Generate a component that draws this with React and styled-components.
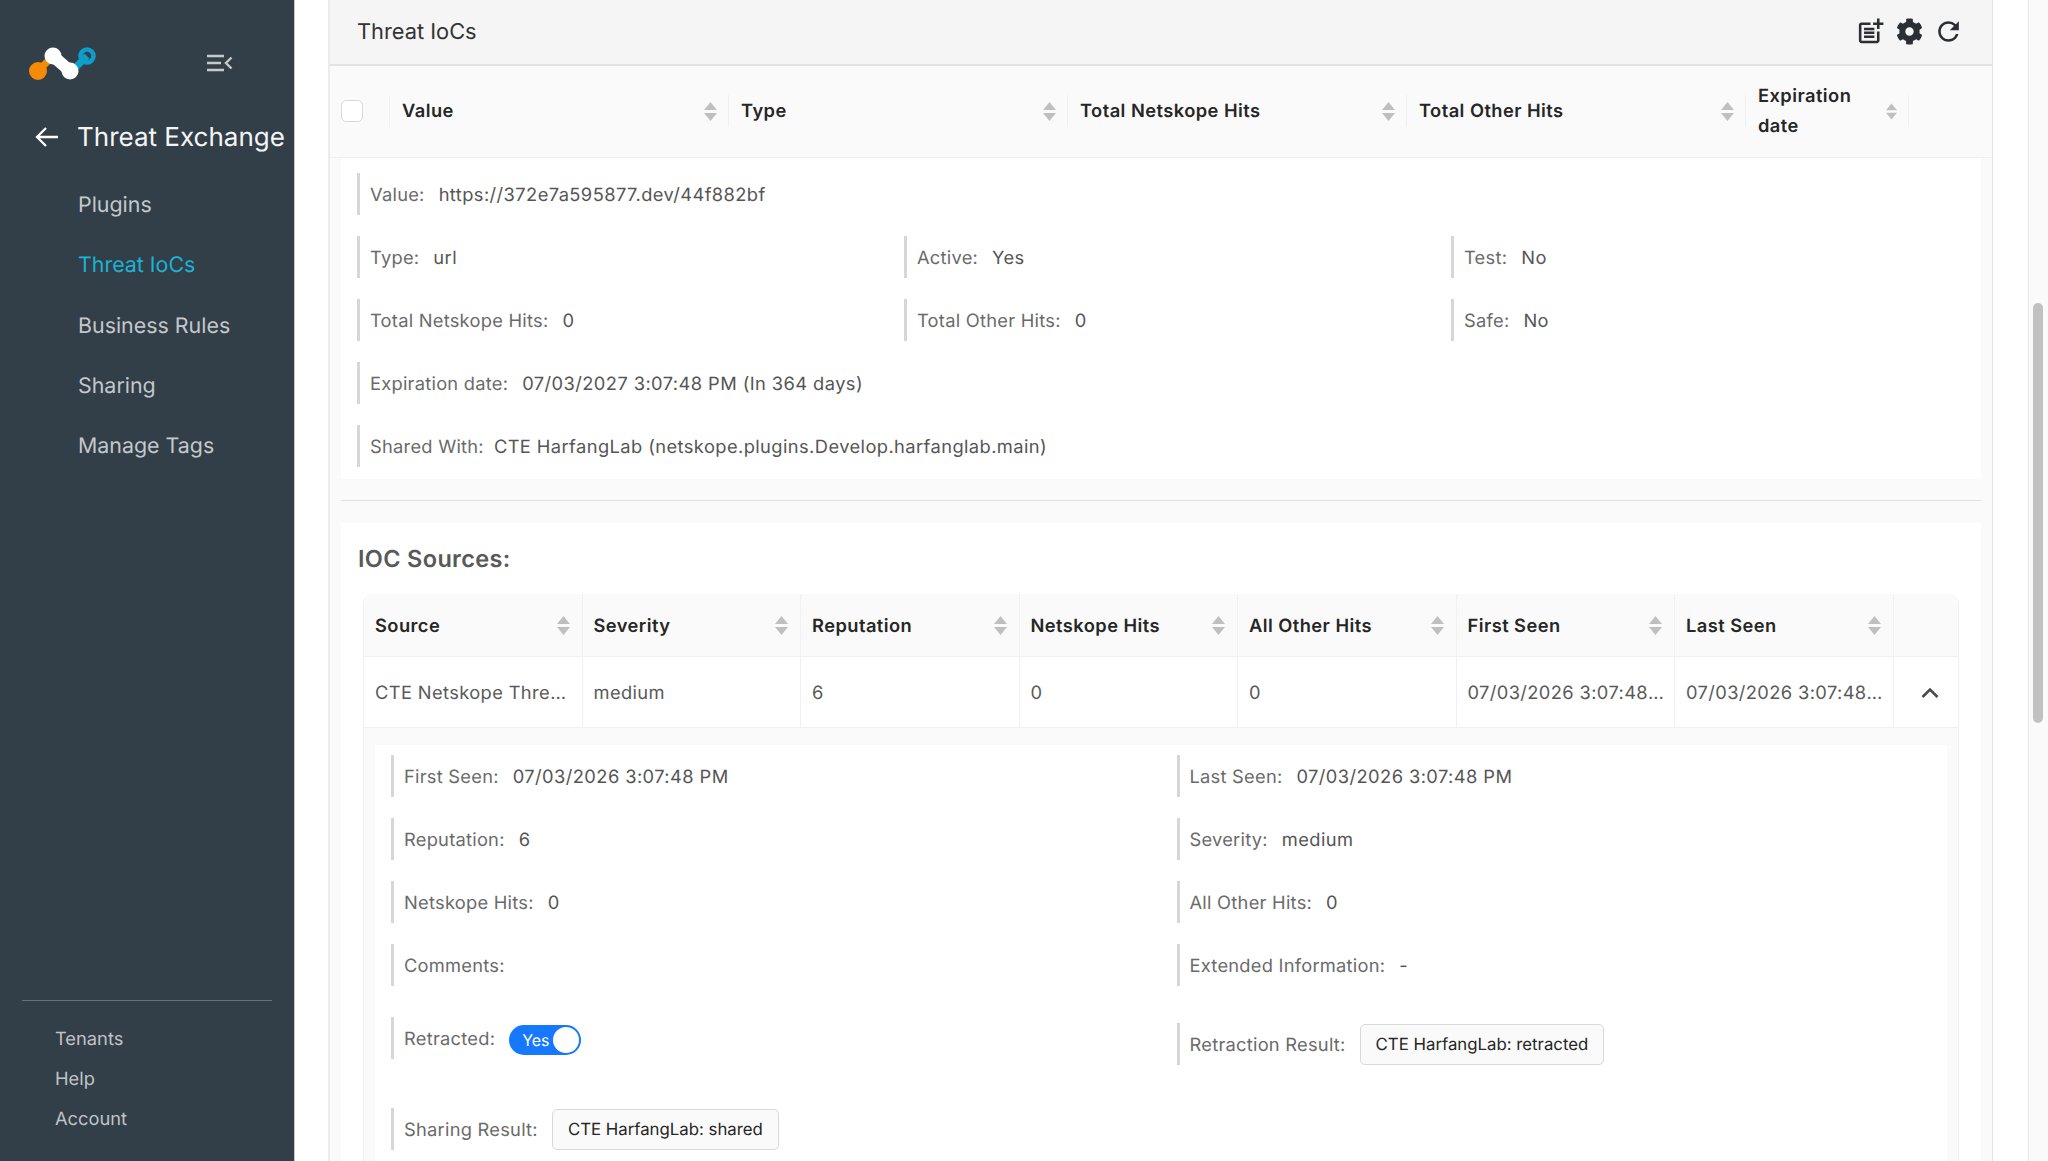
import React from "react";
import styled, { createGlobalStyle } from "styled-components";
import { MdPostAdd, MdRefresh } from "react-icons/md";
import { FaCog } from "react-icons/fa";

const GlobalStyle = createGlobalStyle`
  html, body {
    margin: 0;
    padding: 0;
    height: 100%;
    overflow: hidden;
    background: #fff;
  }
  * {
    box-sizing: border-box;
  }
  body {
    font-family: Inter, "Liberation Sans", sans-serif;
    font-size: 18.3px;
    color: #595959;
    text-rendering: geometricPrecision;
  }
`;

const Logo = () => (
  <svg width="70" height="40" viewBox="0 0 70 40" fill="none">
    <path d="M10 24 L25 9" stroke="#f58a07" strokeWidth="7" />
    <path d="M44 24 L59 9" stroke="#0d9fc9" strokeWidth="7" />
    <circle cx="10" cy="24" r="9" fill="#f58a07" />
    <circle cx="59" cy="9" r="6.5" stroke="#0d9fc9" strokeWidth="4.5" />
    <path d="M25 9 L42 24" stroke="#fff" strokeWidth="12" />
    <circle cx="25" cy="9" r="8.5" fill="#fff" />
    <circle cx="42" cy="24" r="8.5" fill="#fff" />
  </svg>
);

const CollapseIcon = () => (
  <svg width="26" height="18" viewBox="0 0 26 18" fill="none" stroke="#c8c9ca" strokeWidth="2.4">
    <path d="M0 2h17M0 9h14M0 16h17" />
    <path d="M24.5 3.5 19 9l5.500 5.500" />
  </svg>
);

const BackIcon = () => (
  <svg width="24" height="22" viewBox="0 0 24 22" fill="none" stroke="#fff" strokeWidth="2.300">
    <path d="M23 11H2M11 2l-9 9 9 9" />
  </svg>
);

const SortIcon = () => (
  <svg width="13" height="19" viewBox="0 0 13 19" fill="#bfbfbf">
    <path d="M6.500 0 13 8H0zM6.500 19 0 11h13z" />
  </svg>
);

const ChevronUp = () => (
  <svg width="18" height="12" viewBox="0 0 18 12" fill="none" stroke="#4a4a4a" strokeWidth="2.600">
    <path d="M1.500 10 9 2.500 16.500 10" />
  </svg>
);

const navItems = ["Plugins", "Threat IoCs", "Business Rules", "Sharing", "Manage Tags"];
const footerItems = ["Tenants", "Help", "Account"];
const iocColumns = ["Value", "Type", "Total Netskope Hits", "Total Other Hits", "Expiration date"];
const sourceColumns = ["Source", "Severity", "Reputation", "Netskope Hits", "All Other Hits", "First Seen", "Last Seen"];
const sourceRow = [
  "CTE Netskope Threat Exchange",
  "medium",
  "6",
  "0",
  "0",
  "07/03/2026 3:07:48 PM",
  "07/03/2026 3:07:48 PM",
];

const Field = ({ label, value, children, ...rest }) => (
  <FieldBox {...rest}>
    <Label>{label}</Label>
    {value !== undefined && <Value>{value}</Value>}
    {children}
  </FieldBox>
);

const App = () => {
  return (
    <Page>
      <GlobalStyle />
      <Sidebar>
        <LogoRow>
          <LogoMark>
            <Logo />
          </LogoMark>
          <CollapseButton>
            <CollapseIcon />
          </CollapseButton>
        </LogoRow>
        <BackRow>
          <BackIcon />
          <SectionName>Threat Exchange</SectionName>
        </BackRow>
        <Nav>
          {navItems.map((item) => (
            <NavItem key={item} $active={item === "Threat IoCs"}>
              {item}
            </NavItem>
          ))}
        </Nav>
        <SideFooter>
          {footerItems.map((item) => (
            <FooterItem key={item}>{item}</FooterItem>
          ))}
        </SideFooter>
      </Sidebar>

      <Main>
        <Card>
          <TitleBar>
            <Title>Threat IoCs</Title>
            <TitleIcons>
              <MdPostAdd size={31} />
              <FaCog size={27} />
              <MdRefresh size={31} />
            </TitleIcons>
          </TitleBar>

          <HeadRow>
            <CheckCell>
              <Checkbox />
            </CheckCell>
            {iocColumns.map((col) => (
              <HeadCell key={col}>
                <HeadText>{col}</HeadText>
                <SortIcon />
              </HeadCell>
            ))}
          </HeadRow>

          <Expanded>
            <DetailPanel>
              <IocGrid>
                <Field label="Value:" value="https://372e7a595877.dev/44f882bf" $span={3} />
                <Field label="Type:" value="url" />
                <Field label="Active:" value="Yes" />
                <Field label="Test:" value="No" />
                <Field label="Total Netskope Hits:" value="0" />
                <Field label="Total Other Hits:" value="0" />
                <Field label="Safe:" value="No" />
                <Field label="Expiration date:" value="07/03/2027 3:07:48 PM (In 364 days)" $span={3} />
                <Field
                  label="Shared With:"
                  value="CTE HarfangLab (netskope.plugins.Develop.harfanglab.main)"
                  $span={3}
                  $gap={10}
                />
              </IocGrid>
            </DetailPanel>
            <Rule />
            <SourcesPanel>
              <SourcesTitle>IOC Sources:</SourcesTitle>
              <SourceTable>
                <SourceHead>
                  {sourceColumns.map((col) => (
                    <SourceHeadCell key={col}>
                      <HeadText>{col}</HeadText>
                      <SortIcon />
                    </SourceHeadCell>
                  ))}
                  <SourceHeadCell />
                </SourceHead>
                <SourceBody>
                  {sourceRow.map((cell, i) => (
                    <SourceCell key={i}>
                      <Clip>{cell}</Clip>
                    </SourceCell>
                  ))}
                  <SourceCell $center>
                    <ChevronUp />
                  </SourceCell>
                </SourceBody>
                <SourceExpanded>
                  <SourceDetail>
                    <SourceGrid>
                      <Field label="First Seen:" value="07/03/2026 3:07:48 PM" />
                      <Field label="Last Seen:" value="07/03/2026 3:07:48 PM" />
                      <Field label="Reputation:" value="6" />
                      <Field label="Severity:" value="medium" />
                      <Field label="Netskope Hits:" value="0" />
                      <Field label="All Other Hits:" value="0" />
                      <Field label="Comments:" />
                      <Field label="Extended Information:" value="-" />
                      <Field label="Retracted:" $top={10} $bottom={28}>
                        <Toggle>
                          <ToggleText>Yes</ToggleText>
                          <Knob />
                        </Toggle>
                      </Field>
                      <Field label="Retraction Result:" $top={16} $bottom={22}>
                        <ResultTag>CTE HarfangLab: retracted</ResultTag>
                      </Field>
                      <Field label="Sharing Result:">
                        <ResultTag>CTE HarfangLab: shared</ResultTag>
                      </Field>
                    </SourceGrid>
                  </SourceDetail>
                </SourceExpanded>
              </SourceTable>
            </SourcesPanel>
          </Expanded>
        </Card>
      </Main>

      <Scrollbar>
        <Thumb />
      </Scrollbar>
    </Page>
  );
};

const Page = styled.div`
  display: flex;
  width: 2048px;
  height: 1161px;
  overflow: hidden;
`;

const Sidebar = styled.aside`
  display: flex;
  flex-direction: column;
  flex: 0 0 295px;
  height: 100%;
  background-color: #323f49;
  border-right: 1px solid #c7cbce;
`;

const LogoRow = styled.div`
  display: flex;
  align-items: center;
  padding: 39px 0 0 28px;
  height: 87px;
`;

const LogoMark = styled.div`
  display: flex;
  padding-top: 8px;
`;

const CollapseButton = styled.div`
  display: flex;
  margin-left: 109px;
`;

const BackRow = styled.div`
  display: flex;
  align-items: center;
  gap: 18px;
  padding: 0 0 0 35px;
  height: 36px;
  margin-top: 32px;
  white-space: nowrap;
`;

const SectionName = styled.div`
  font-size: 26px;
  font-weight: 400;
  color: #f4f5f5;
`;

const Nav = styled.nav`
  display: flex;
  flex-direction: column;
  margin-top: 20px;
`;

const NavItem = styled.a`
  display: flex;
  align-items: center;
  height: 60.300px;
  padding-left: 78px;
  font-size: 21.400px;
  color: ${(p) => (p.$active ? "#1bb3d6" : "#c4c8cb")};
`;

const SideFooter = styled.div`
  display: flex;
  flex-direction: column;
  margin: auto 22px 0;
  padding: 18px 0 22px 33px;
  border-top: 1px solid #66717a;
`;

const FooterItem = styled.a`
  display: flex;
  align-items: center;
  height: 40px;
  font-size: 18.300px;
  color: #c0c4c7;
`;

const Main = styled.main`
  flex: 1;
  min-width: 0;
  padding: 0 35px 0 33px;
`;

const Card = styled.section`
  border-left: 2px solid #ececec;
  border-right: 1px solid #e2e2e2;
  background: #fafafa;
`;

const TitleBar = styled.header`
  display: flex;
  align-items: center;
  justify-content: space-between;
  height: 66px;
  padding: 0 28px 0 27px;
  background: #f5f5f5;
  border-bottom: 2px solid #e3e3e3;
`;

const Title = styled.h2`
  margin: 0;
  font-size: 21.800px;
  font-weight: 400;
  color: #333;
`;

const TitleIcons = styled.div`
  display: flex;
  align-items: center;
  gap: 10px;
  margin-bottom: 2px;
  color: #2b2f33;
`;

const HeadRow = styled.div`
  display: grid;
  grid-template-columns: 60px repeat(4, 339px) 163px 1fr;
  height: 92px;
  background: #fafafa;
  border-bottom: 1px solid #f0f0f0;
`;

const HeadCell = styled.div`
  position: relative;
  display: flex;
  align-items: center;
  justify-content: space-between;
  gap: 10px;
  padding: 0 12px 1px 12px;
  &::after {
    content: "";
    position: absolute;
    right: 0;
    top: 29px;
    height: 32px;
    width: 1px;
    background: #efefef;
  }
`;

const CheckCell = styled(HeadCell)`
  justify-content: flex-start;
  padding-left: 11px;
`;

const Checkbox = styled.span`
  display: block;
  width: 22px;
  height: 22px;
  background: #fff;
  border: 1px solid #d9d9d9;
  border-radius: 5px;
`;

const HeadText = styled.span`
  font-weight: 600;
  letter-spacing: 0.45px;
  color: #262626;
  line-height: 30px;
`;

const Expanded = styled.div`
  padding: 0 11px 0 11px;
  background: #fafafa;
`;

const DetailPanel = styled.div`
  padding: 15px 16px 12px;
  background: #fff;
`;

const IocGrid = styled.div`
  display: grid;
  grid-template-columns: repeat(3, 547px);
  row-gap: 21px;
`;

const FieldBox = styled.div`
  display: flex;
  align-items: center;
  gap: ${(p) => p.$gap || 14}px;
  height: 42px;
  padding: 1px 0 0 10px;
  border-left: 3px solid #d6d6d6;
  grid-column: span ${(p) => p.$span || 1};
  margin-top: ${(p) => p.$top || 0}px;
  margin-bottom: ${(p) => p.$bottom || 0}px;
  white-space: nowrap;
`;

const Label = styled.span`
  letter-spacing: 0.25px;
  color: #6a6a6a;
`;

const Value = styled.span`
  letter-spacing: 0.42px;
  color: #555;
`;

const Rule = styled.div`
  height: 1px;
  margin: 21px 0 22px;
  background: #e2e2e2;
`;

const SourcesPanel = styled.div`
  padding: 20px 22px 0;
  background: #fff;
`;

const SourcesTitle = styled.h3`
  margin: 0 0 20px -5px;
  padding: 0;
  height: 31px;
  font-size: 23.500px;
  letter-spacing: 0.33px;
  line-height: 31px;
  font-weight: 600;
  color: #595959;
`;

const SourceTable = styled.div`
  border-left: 1px solid #f0f0f0;
  border-right: 1px solid #f0f0f0;
  border-radius: 10px 10px 0 0;
  overflow: hidden;
`;

const SourceHead = styled.div`
  display: grid;
  grid-template-columns: repeat(7, 218.500px) 1fr;
  height: 63px;
  background: #fafafa;
  border-bottom: 1px solid #f0f0f0;
`;

const SourceHeadCell = styled.div`
  display: flex;
  align-items: center;
  justify-content: space-between;
  padding: 1px 12px 0 11px;
  border-right: 1px solid #f0f0f0;
  &:last-child {
    border-right: none;
  }
`;

const SourceBody = styled.div`
  display: grid;
  grid-template-columns: repeat(7, 218.500px) 1fr;
  height: 71px;
  border-bottom: 1px solid #f0f0f0;
`;

const SourceCell = styled.div`
  display: flex;
  align-items: center;
  justify-content: ${(p) => (p.$center ? "center" : "flex-start")};
  min-width: 0;
  padding: 1px ${(p) => (p.$center ? "5px" : "10px")} 0 ${(p) => (p.$center ? "13px" : "11px")};
  border-right: 1px solid #f0f0f0;
  &:last-child {
    border-right: none;
  }
`;

const Clip = styled.span`
  overflow: hidden;
  white-space: nowrap;
  text-overflow: ellipsis;
  letter-spacing: 0.38px;
  color: #595959;
`;

const SourceExpanded = styled.div`
  padding: 17px 11px 0;
  background: #fafafa;
`;

const SourceDetail = styled.div`
  padding: 10px 16px 40px;
  background: #fff;
`;

const SourceGrid = styled.div`
  display: grid;
  grid-template-columns: 785.500px 1fr;
  row-gap: 21px;
  align-items: start;
`;

const Toggle = styled.span`
  display: flex;
  align-items: center;
  justify-content: space-between;
  width: 72px;
  height: 30px;
  margin-top: 2px;
  padding: 0 2px 0 13px;
  background: #1677ff;
  border-radius: 15px;
`;

const ToggleText = styled.span`
  font-size: 16px;
  color: #fff;
`;

const Knob = styled.span`
  width: 26px;
  height: 26px;
  border-radius: 50%;
  background: #fff;
`;

const ResultTag = styled.span`
  display: flex;
  align-items: center;
  height: 41px;
  padding: 0 15px;
  font-size: 16.800px;
  color: #262626;
  background: #fafafa;
  border: 1px solid #d9d9d9;
  border-radius: 5px;
`;

const Scrollbar = styled.div`
  flex: 0 0 20px;
  padding: 303px 5px 0 4px;
  background: #fafafa;
  border-left: 1px solid #e8e8e8;
`;

const Thumb = styled.div`
  height: 420px;
  background: #c1c1c1;
  border-radius: 5px;
`;

export default App;
